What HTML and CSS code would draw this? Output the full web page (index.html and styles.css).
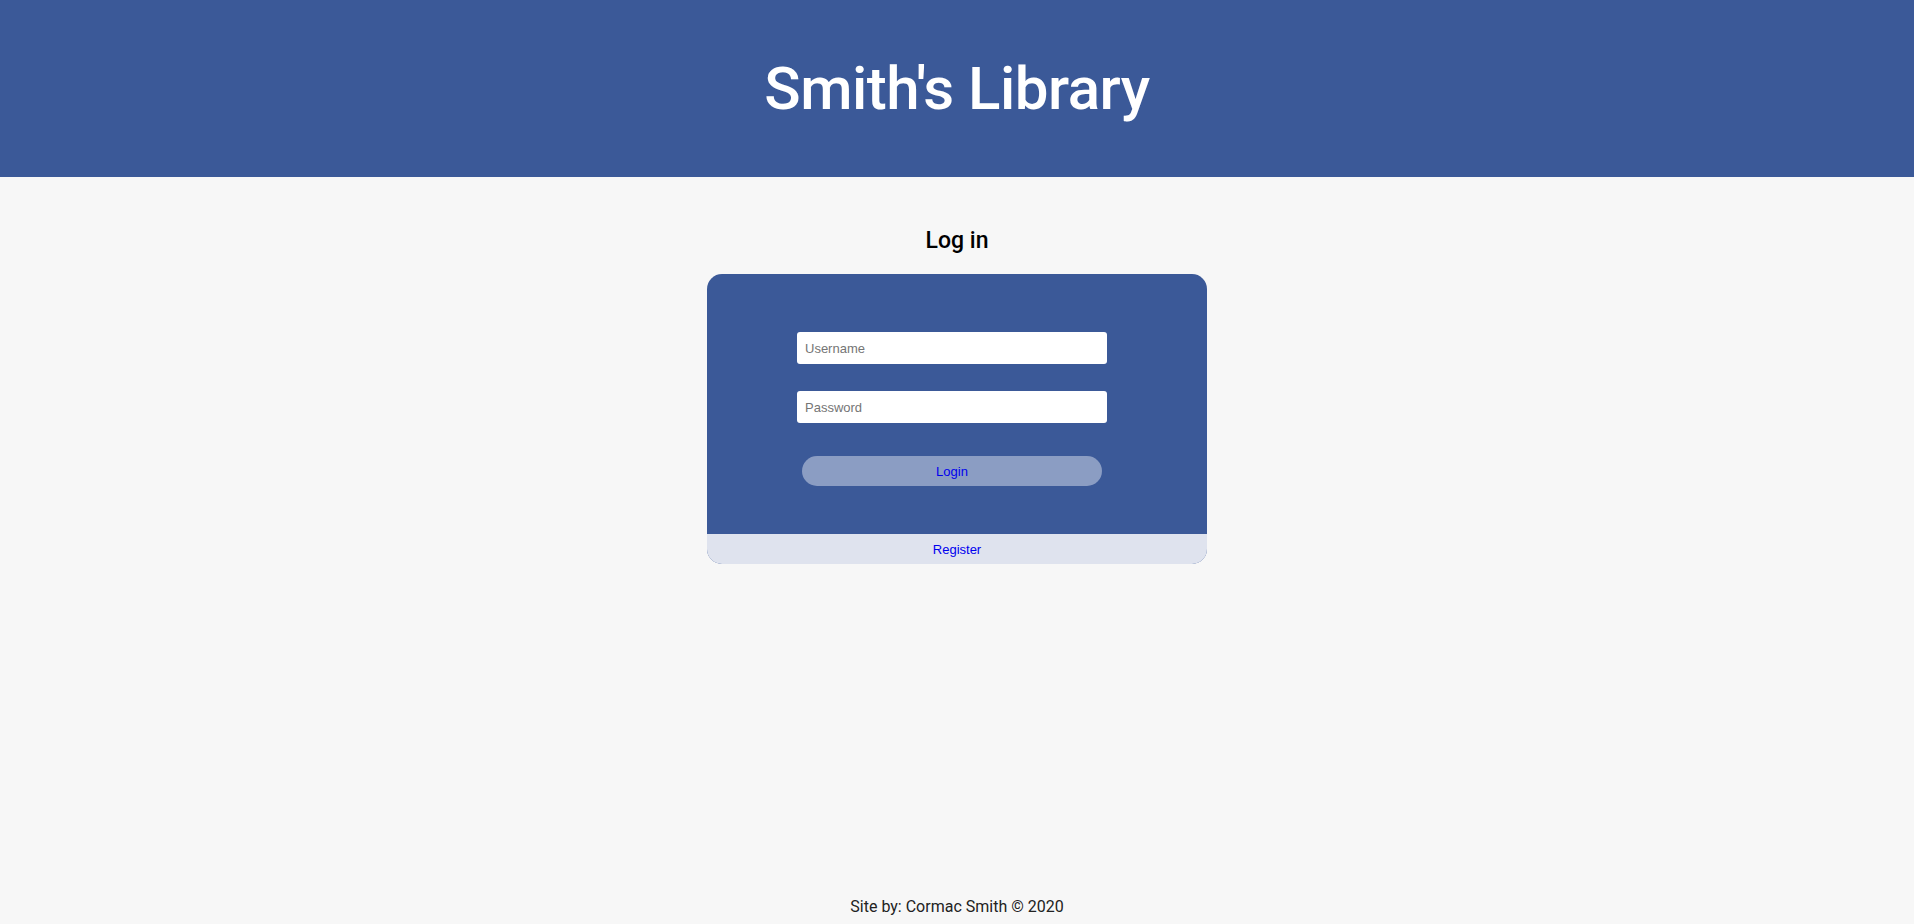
FILE: index.html
```html
<!DOCTYPE html>
<html lang="en">
<head>
<meta charset="utf-8">
<title>Smith's Library</title>
<link rel="stylesheet" href="styles.css">
</head>
<body>
<div class="page">
  <header class="site-header">
    <h1 class="site-title">Smith's Library</h1>
  </header>
  <main class="main">
    <h2 class="login-heading">Log in</h2>
    <div class="card">
      <form class="login-form">
        <input class="field" type="text" placeholder="Username">
        <input class="field" type="password" placeholder="Password">
        <button class="login-btn" type="button">Login</button>
      </form>
      <div class="card-footer"><a class="register-link" href="#">Register</a></div>
    </div>
  </main>
  <footer class="site-footer">Site by: Cormac Smith © 2020</footer>
</div>
</body>
</html>
```

FILE: styles.css
```css
* { box-sizing: border-box; }
html, body { margin: 0; padding: 0; }
body {
  background: #f7f7f7;
  font-family: Roboto, "Liberation Sans", sans-serif;
  color: #000;
}
.page {
  min-height: 100vh;
  display: flex;
  flex-direction: column;
}
.site-header {
  background: #3b5998;
  height: 177px;
  display: flex;
  align-items: center;
  justify-content: center;
}
.site-title {
  margin: 0;
  color: #fff;
  font-family: Roboto, sans-serif;
  font-weight: 500;
  font-size: 60px;
  line-height: 1;
  letter-spacing: -0.5px;
}
.main {
  display: flex;
  flex-direction: column;
  align-items: center;
}
.login-heading {
  margin: 48px 0 17px;
  font-size: 23px;
  font-weight: 500;
  line-height: 32px;
}
.card {
  width: 500px;
  background: #3b5998;
  border-radius: 15px;
  overflow: hidden;
}
.login-form {
  display: flex;
  flex-direction: column;
  align-items: center;
  padding: 58px 10px 48px 0;
}
.field {
  width: 310px;
  height: 32px;
  border: none;
  border-radius: 3px;
  background: #fff;
  padding: 0 8px;
  font-family: "Liberation Sans", Arial, sans-serif;
  font-size: 13px;
  color: #333;
  margin-bottom: 27px;
}
.field:nth-child(2) { margin-bottom: 33px; }
.field::placeholder { color: #757575; }
.login-btn {
  width: 300px;
  height: 30px;
  border: none;
  border-radius: 15px;
  background: #8b9dc3;
  color: #0000ee;
  font-family: "Liberation Sans", Arial, sans-serif;
  font-size: 13px;
  padding: 0;
}
.card-footer {
  background: #dfe3ee;
  height: 30px;
  display: flex;
  align-items: center;
  justify-content: center;
}
.register-link {
  color: #0000ee;
  text-decoration: none;
  font-family: "Liberation Sans", Arial, sans-serif;
  font-size: 13px;
}
.site-footer {
  margin-top: auto;
  text-align: center;
  font-size: 16px;
  line-height: 20px;
  padding-bottom: 7px;
  color: #222;
}
```
